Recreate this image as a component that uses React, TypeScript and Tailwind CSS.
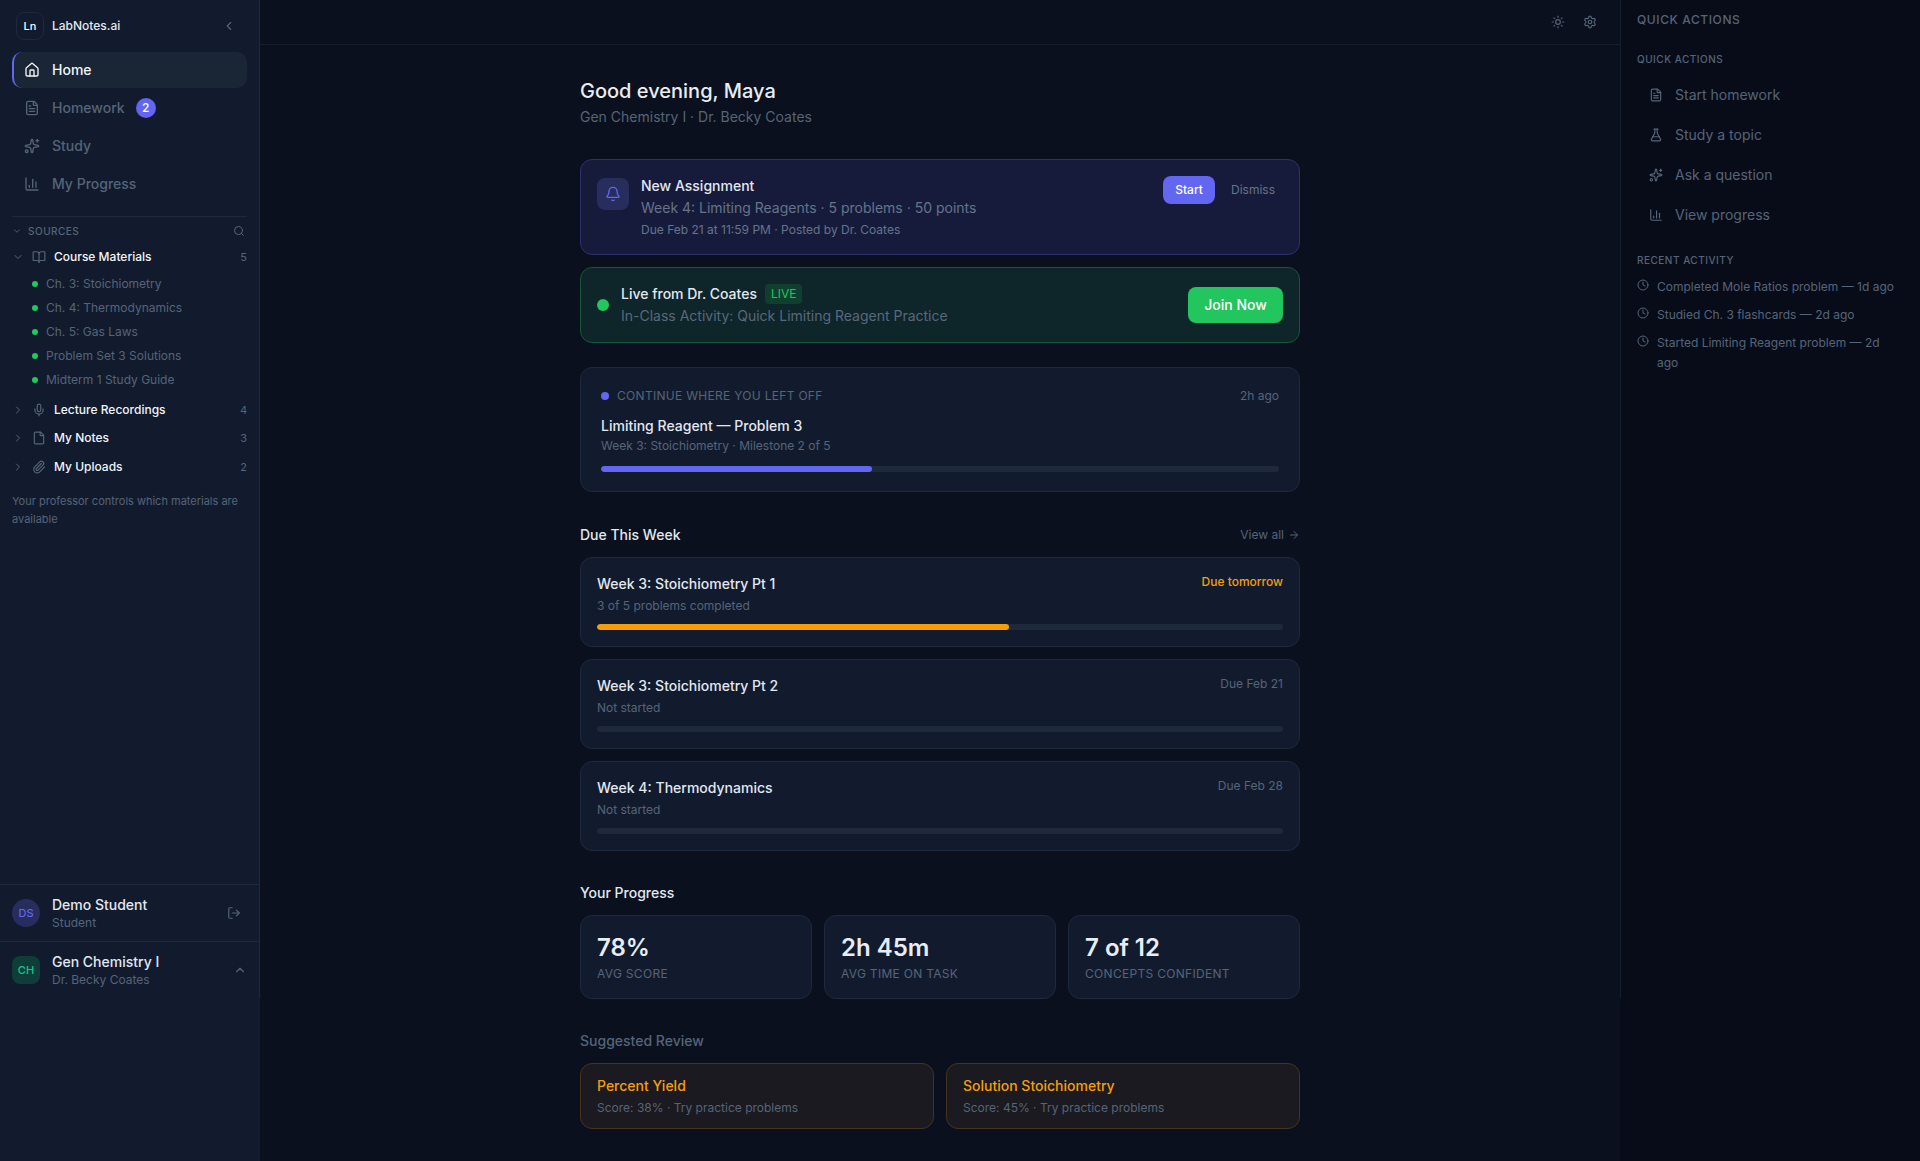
import {
  ArrowRight,
  Bell,
  BookOpen,
  ChartColumn,
  ChevronDown,
  ChevronLeft,
  ChevronRight,
  ChevronUp,
  Clock,
  File,
  FileText,
  FlaskConical,
  House,
  LogOut,
  Mic,
  Paperclip,
  Search,
  Settings,
  Sparkles,
  Sun,
} from "lucide-react";

const materials = [
  "Ch. 3: Stoichiometry",
  "Ch. 4: Thermodynamics",
  "Ch. 5: Gas Laws",
  "Problem Set 3 Solutions",
  "Midterm 1 Study Guide",
];

const folders = [
  { name: "Lecture Recordings", count: 4, icon: Mic },
  { name: "My Notes", count: 3, icon: File },
  { name: "My Uploads", count: 2, icon: Paperclip },
];

const dueItems = [
  { title: "Week 3: Stoichiometry Pt 1", sub: "3 of 5 problems completed", due: "Due tomorrow", pct: 60 },
  { title: "Week 3: Stoichiometry Pt 2", sub: "Not started", due: "Due Feb 21", pct: 0 },
  { title: "Week 4: Thermodynamics", sub: "Not started", due: "Due Feb 28", pct: 0 },
];

const stats = [
  { value: "78%", label: "Avg Score" },
  { value: "2h 45m", label: "Avg Time on Task" },
  { value: "7 of 12", label: "Concepts Confident" },
];

const reviews = [
  { title: "Percent Yield", sub: "Score: 38% · Try practice problems" },
  { title: "Solution Stoichiometry", sub: "Score: 45% · Try practice problems" },
];

const quickActions = [
  { label: "Start homework", icon: FileText },
  { label: "Study a topic", icon: FlaskConical },
  { label: "Ask a question", icon: Sparkles },
  { label: "View progress", icon: ChartColumn },
];

const activity = [
  "Completed Mole Ratios problem — 1d ago",
  "Studied Ch. 3 flashcards — 2d ago",
  "Started Limiting Reagent problem — 2d ago",
];

function NavItem({ label, icon: Icon, active, badge }: { label: string; icon: typeof House; active?: boolean; badge?: number }) {
  return (
    <div
      className={
        active
          ? "flex h-9 items-center gap-3 rounded-[10px] border-l-2 border-[#6366f1] bg-[#1a2535] pl-2.5 text-sm font-medium text-[#f1f5f9]"
          : "flex h-9 items-center gap-3 rounded-[10px] border-l-2 border-transparent pl-2.5 text-sm font-medium text-[#566479]"
      }
    >
      <Icon size={16} />
      <span>{label}</span>
      {badge ? (
        <span className="-ml-px flex size-5 items-center justify-center rounded-full bg-[#6366f1] text-xs font-medium text-white">
          {badge}
        </span>
      ) : null}
    </div>
  );
}

function Sidebar() {
  return (
    <aside className="w-[260px] shrink-0 bg-[#111b2d]">
      <div className="flex h-[998px] flex-col border-r border-[#1e293b]">
        <div className="flex items-center px-4 pt-3">
          <div className="flex size-7 items-center justify-center rounded-lg border border-[#1e293b] text-[11px] font-medium text-white">
            Ln
          </div>
          <span className="ml-2 text-xs font-medium text-[#e2e8f0]">LabNotes.ai</span>
          <ChevronLeft size={14} className="ml-auto mr-[7px] text-[#566479]" />
        </div>

        <nav className="mt-3 flex flex-col gap-0.5 pl-3 pr-3">
          <NavItem label="Home" icon={House} active />
          <NavItem label="Homework" icon={FileText} badge={2} />
          <NavItem label="Study" icon={Sparkles} />
          <NavItem label="My Progress" icon={ChartColumn} />
        </nav>

        <div className="mx-3 mt-3.5 border-t border-[#1e293b]" />

        <div className="mt-1.5 flex h-4 items-center pl-3 pr-[14px] text-[#566479]">
          <ChevronDown size={10} />
          <span className="ml-1.5 text-[10px] font-medium uppercase tracking-[0.05em]">Sources</span>
          <Search size={12} className="ml-auto" />
        </div>

        <div className="mt-1 flex h-7 items-center pl-3 pr-3">
          <ChevronDown size={12} className="text-[#566479]" />
          <BookOpen size={14} className="ml-2 text-[#566479]" />
          <span className="ml-2 text-xs font-medium text-[#f1f5f9]">Course Materials</span>
          <span className="ml-auto text-[11px] text-[#566479]">5</span>
        </div>

        <ul className="mt-px flex flex-col">
          {materials.map((m) => (
            <li key={m} className="flex h-6 items-center pl-8 text-xs text-[#566479]">
              <span className="size-1.5 rounded-full bg-[#22c55e]" />
              <span className="ml-2">{m}</span>
            </li>
          ))}
        </ul>

        <div className="mt-[3.5px] flex flex-col">
          {folders.map((f) => (
            <div key={f.name} className="flex h-[28.5px] items-center pl-3 pr-3">
              <ChevronRight size={12} className="text-[#566479]" />
              <f.icon size={14} className="ml-2 text-[#566479]" />
              <span className="ml-2 text-xs font-medium text-[#f1f5f9]">{f.name}</span>
              <span className="ml-auto text-[11px] text-[#566479]">{f.count}</span>
            </div>
          ))}
        </div>

        <p className="mt-[11px] px-3 text-[11px] leading-[18px] text-[#566479]">
          Your professor controls which materials are available
        </p>

        <div className="mt-auto flex h-[57px] items-center border-t border-[#1e293b] px-3">
          <div className="flex size-7 items-center justify-center rounded-full bg-[#272d5c] text-[11px] font-medium text-[#6366f1]">
            DS
          </div>
          <div className="ml-3 flex flex-col">
            <span className="text-sm leading-[18px] font-medium text-[#e2e8f0]">Demo Student</span>
            <span className="mt-px text-xs leading-4 text-[#566479]">Student</span>
          </div>
          <LogOut size={14} className="ml-auto mr-1.5 text-[#566479]" />
        </div>
        <div className="flex h-[57px] items-center border-t border-[#1e293b] px-3">
          <div className="flex size-7 items-center justify-center rounded-lg bg-[#0f3d3a] text-[11px] font-medium text-[#10c98a]">
            CH
          </div>
          <div className="ml-3 flex flex-col">
            <span className="text-sm leading-[18px] font-medium text-[#e2e8f0]">Gen Chemistry I</span>
            <span className="mt-px text-xs leading-4 text-[#566479]">Dr. Becky Coates</span>
          </div>
          <ChevronUp size={14} className="ml-auto text-[#566479]" />
        </div>
      </div>
    </aside>
  );
}

function Bar({ pct, color }: { pct: number; color: string }) {
  return (
    <div className="h-1.5 overflow-hidden rounded-full bg-[#1e293b]">
      <div className={`h-full rounded-full ${color}`} style={{ width: `${pct}%` }} />
    </div>
  );
}

function MainContent() {
  return (
    <main className="min-w-0 flex-1 bg-[#0a101d]">
      <header className="flex h-[45px] items-center justify-end gap-[18px] border-b border-[#141d2e] pr-[23px] text-[#566479]">
        <Sun size={14} />
        <Settings size={14} />
      </header>

      <div className="mx-auto w-[720px] pt-8">
        <h1 className="text-xl font-medium text-[#e8edf4]">Good evening, Maya</h1>
        <p className="mt-0.5 mb-8 text-sm text-[#566479]">Gen Chemistry I · Dr. Becky Coates</p>

        <section className="flex gap-3 rounded-xl border border-[#2e3170] bg-[#171b3b] p-4">
          <div className="mt-0.5 flex size-8 shrink-0 items-center justify-center rounded-lg bg-[#272d5c] text-[#6366f1]">
            <Bell size={16} />
          </div>
          <div className="min-w-0 flex-1">
            <div className="text-sm font-medium text-[#e2e8f0]">New Assignment</div>
            <div className="mt-0.5 text-sm text-[#64748b]">Week 4: Limiting Reagents · 5 problems · 50 points</div>
            <div className="mt-1 text-xs text-[#64748b]">Due Feb 21 at 11:59 PM · Posted by Dr. Coates</div>
          </div>
          <div className="flex items-start">
            <button className="h-7 w-[52px] rounded-lg bg-[#6366f1] text-xs font-medium text-white">Start</button>
            <button className="ml-4 mr-2 h-7 text-xs text-[#64748b]">Dismiss</button>
          </div>
        </section>

        <section className="mt-3 flex items-center gap-3 rounded-xl border border-[#14573a] bg-[#0e2529] p-4">
          <span className="size-3 shrink-0 rounded-full bg-[#22c55e]" />
          <div className="min-w-0 flex-1">
            <div className="flex items-center gap-2 text-sm font-medium text-[#e2e8f0]">
              Live from Dr. Coates
              <span className="flex h-5 items-center rounded bg-[#0f3f2f] px-1.5 text-xs font-normal text-[#22c55e]">LIVE</span>
            </div>
            <div className="mt-0.5 text-sm text-[#5a687d]">In-Class Activity: Quick Limiting Reagent Practice</div>
          </div>
          <button className="h-9 w-[95px] rounded-lg bg-[#22c55e] text-sm font-medium text-white">Join Now</button>
        </section>

        <section className="mt-6 rounded-xl border border-[#1e293b] bg-[#121b2e] px-5 pt-5 pb-[19px]">
          <div className="flex h-4 items-center">
            <span className="size-2 rounded-full bg-[#6366f1]" />
            <span className="ml-2 text-xs tracking-[0.025em] text-[#566479] uppercase">Continue where you left off</span>
            <span className="ml-auto text-xs text-[#566479]">2h ago</span>
          </div>
          <div className="mt-3 text-sm font-medium text-[#e2e8f0]">Limiting Reagent — Problem 3</div>
          <div className="mt-0.5 text-xs text-[#566479]">Week 3: Stoichiometry · Milestone 2 of 5</div>
          <div className="mt-3">
            <Bar pct={40} color="bg-[#6366f1]" />
          </div>
        </section>

        <div className="mt-[33px] mb-3 flex items-center justify-between">
          <h2 className="text-sm font-medium text-[#e2e8f0]">Due This Week</h2>
          <span className="flex items-center gap-1 text-xs text-[#566479]">
            View all <ArrowRight size={12} />
          </span>
        </div>

        <div className="flex flex-col gap-3">
          {dueItems.map((d, i) => (
            <div key={d.title} className="rounded-xl border border-[#1e293b] bg-[#121b2e] p-4">
              <div className="flex items-start justify-between">
                <div className="text-sm font-medium text-[#e2e8f0]">{d.title}</div>
                <div className={i === 0 ? "text-xs font-medium text-[#f59e0b]" : "text-xs text-[#566479]"}>{d.due}</div>
              </div>
              <div className="mt-1 text-xs text-[#566479]">{d.sub}</div>
              <div className="mt-2.5">
                <Bar pct={d.pct} color="bg-[#f59e0b]" />
              </div>
            </div>
          ))}
        </div>

        <h2 className="mt-8 mb-3 text-sm font-medium text-[#e2e8f0]">Your Progress</h2>
        <div className="grid grid-cols-3 gap-3">
          {stats.map((s) => (
            <div key={s.label} className="rounded-xl border border-[#1e293b] bg-[#121b2e] p-4">
              <div className="text-2xl font-semibold text-[#e8edf4]">{s.value}</div>
              <div className="mt-0.5 text-xs tracking-[0.025em] text-[#566479] uppercase">{s.label}</div>
            </div>
          ))}
        </div>

        <h2 className="mt-8 mb-3 text-sm font-medium text-[#566479]">Suggested Review</h2>
        <div className="grid grid-cols-2 gap-3 pb-8">
          {reviews.map((r) => (
            <div key={r.title} className="rounded-xl border border-[#4a3419] bg-[#1b1a20] px-4 py-3">
              <div className="text-sm font-medium text-[#f59e0b]">{r.title}</div>
              <div className="mt-1 text-xs text-[#566479]">{r.sub}</div>
            </div>
          ))}
        </div>
      </div>
    </main>
  );
}

function RightPanel() {
  return (
    <aside className="w-[300px] shrink-0 bg-[#080c18]">
      <div className="h-[998px] border-l border-[#141d2e] pl-4 pr-4">
        <div className="flex h-10 items-center text-xs font-medium tracking-[0.05em] text-[#566479] uppercase">Quick Actions</div>
        <div className="mt-3 text-[10px] font-medium tracking-[0.05em] text-[#566479] uppercase">Quick Actions</div>
        <div className="mt-2 flex flex-col">
          {quickActions.map((a) => (
            <div key={a.label} className="flex h-10 items-center gap-3 pl-3 text-sm text-[#566479]">
              <a.icon size={14} />
              <span>{a.label}</span>
            </div>
          ))}
        </div>
        <div className="mt-[18px] text-[10px] font-medium tracking-[0.05em] text-[#566479] uppercase">Recent Activity</div>
        <ul className="mt-[9px] flex flex-col gap-2">
          {activity.map((a) => (
            <li key={a} className="flex gap-2 text-xs leading-5 text-[#566479]">
              <Clock size={12} className="mt-0.5 shrink-0" />
              <span>{a}</span>
            </li>
          ))}
        </ul>
      </div>
    </aside>
  );
}

export default function App() {
  return (
    <div className="flex min-h-screen bg-[#0a101d] font-['Inter',sans-serif] antialiased">
      <Sidebar />
      <MainContent />
      <RightPanel />
    </div>
  );
}
